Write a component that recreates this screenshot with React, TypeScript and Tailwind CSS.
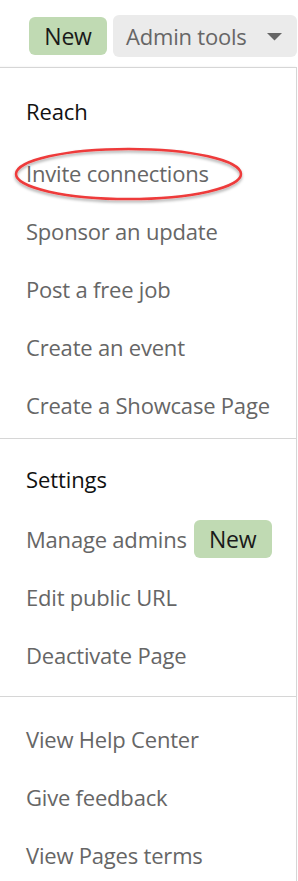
import React from "react";

const font = { fontFamily: '"Open Sans", "Noto Sans", sans-serif' };

function Item({ children }: { children: React.ReactNode }) {
  return (
    <div className="flex h-[58px] items-center whitespace-nowrap pl-[26px] text-[22px] leading-[58px] tracking-[-0.2px] text-[#666666]">
      {children}
    </div>
  );
}

function Heading({ children, className = "" }: { children: React.ReactNode; className?: string }) {
  return (
    <div className={"h-[58px] pl-[26px] text-[22px] font-medium leading-[58px] tracking-[-0.1px] text-[#111111] " + className}>
      {children}
    </div>
  );
}

function NewBadge() {
  return (
    <span className="inline-flex h-[38px] w-[78px] items-center justify-center rounded-[6px] bg-[#c0dab3] text-[23px] leading-none tracking-[-0.2px] text-[#1a1a1a]">
      New
    </span>
  );
}

export default function App() {
  return (
    <div className="relative h-[881px] w-[298px] overflow-hidden bg-white" style={font}>
      <div className="flex items-center justify-end gap-[6px] pr-[1px] pt-[15px]">
        <NewBadge />
        <button className="flex h-[42px] w-[184px] items-center rounded-[6px] bg-[#ebebeb] pl-[13px] pr-[15px] text-[22px] leading-none tracking-[-0.2px] text-[#666666]">
          <span className="flex-1 text-left">Admin tools</span>
          <svg width="15" height="8" viewBox="0 0 15 8" className="mt-[1px]">
            <path d="M0 0 H15 L7.5 7.5 Z" fill="#666666" />
          </svg>
        </button>
      </div>

      <div className="mt-[10px] w-[297px] border-t border-r border-[#d6d6d6] shadow-[-1px_0_2px_rgba(0,0,0,0.08)]">
        <div className="border-b border-[#d6d6d6] pb-[4px] pt-[14px]">
          <Heading className="mb-[4px]">Reach</Heading>
          <Item>Invite connections</Item>
          <Item>Sponsor an update</Item>
          <Item>Post a free job</Item>
          <Item>Create an event</Item>
          <Item>Create a Showcase Page</Item>
        </div>
        <div className="border-b border-[#d6d6d6] pb-[12px] pt-[11px]">
          <Heading className="mb-[2px]">Settings</Heading>
          <Item>
            <span>Manage admins</span>
            <span className="ml-[7px] flex">
              <NewBadge />
            </span>
          </Item>
          <Item>Edit public URL</Item>
          <Item>Deactivate Page</Item>
        </div>
        <div className="pt-[13px]">
          <Item>View Help Center</Item>
          <Item>Give feedback</Item>
          <Item>View Pages terms</Item>
        </div>
      </div>

      <svg
        className="pointer-events-none absolute left-0 top-0"
        width="298"
        height="881"
        viewBox="0 0 298 881"
      >
        <defs>
          <filter id="sh" x="-20%" y="-50%" width="140%" height="200%">
            <feDropShadow dx="0" dy="2" stdDeviation="1.5" floodColor="#000" floodOpacity="0.35" />
          </filter>
        </defs>
        <ellipse cx="128.5" cy="174" rx="112.5" ry="25" fill="none" stroke="#ee3b3b" strokeWidth="2.5" filter="url(#sh)" />
      </svg>
    </div>
  );
}
